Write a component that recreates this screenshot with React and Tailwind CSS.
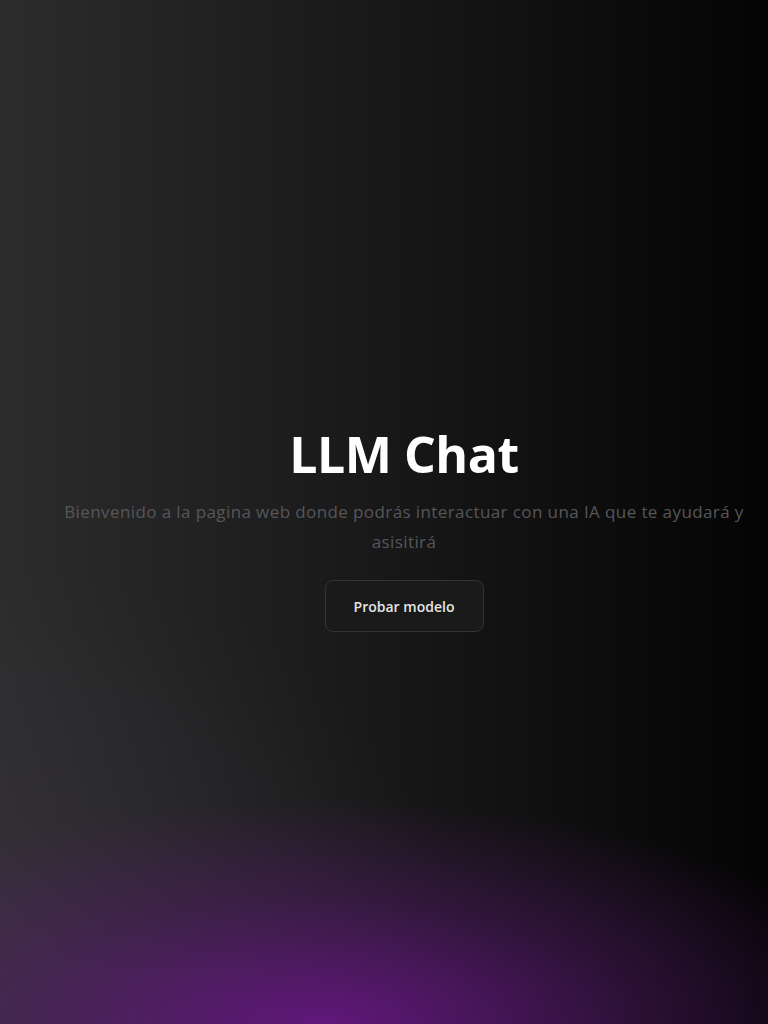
export default function App() {
  return (
    <div
      className="min-h-screen w-full flex flex-col items-center justify-center pl-10 pt-8 bg-[radial-gradient(ellipse_75%_22%_at_42%_100%,rgba(108,22,138,0.85),rgba(90,25,115,0.4)_55%,transparent),radial-gradient(ellipse_60%_40%_at_0%_95%,rgba(70,60,80,0.35),transparent),linear-gradient(to_right,#2c2c2c,#181818_50%,#040404)]"
      style={{ fontFamily: '"Open Sans", "Noto Sans", sans-serif' }}
    >
      <h1 className="text-[50px] font-bold text-white leading-[1.2] tracking-[-0.5px]">LLM Chat</h1>
      <p className="mt-[13px] max-w-[700px] text-center text-[17px] leading-[30px] tracking-[0.4px] text-[#56565a]">
        Bienvenido a la pagina web donde podrás interactuar con una IA que te ayudará y asisitirá
      </p>
      <button className="mt-[23px] h-[52px] w-[159px] rounded-lg border border-[#333] bg-[#1a1a1a] text-[14px] font-semibold text-[#e5e5e5]">
        Probar modelo
      </button>
    </div>
  );
}
